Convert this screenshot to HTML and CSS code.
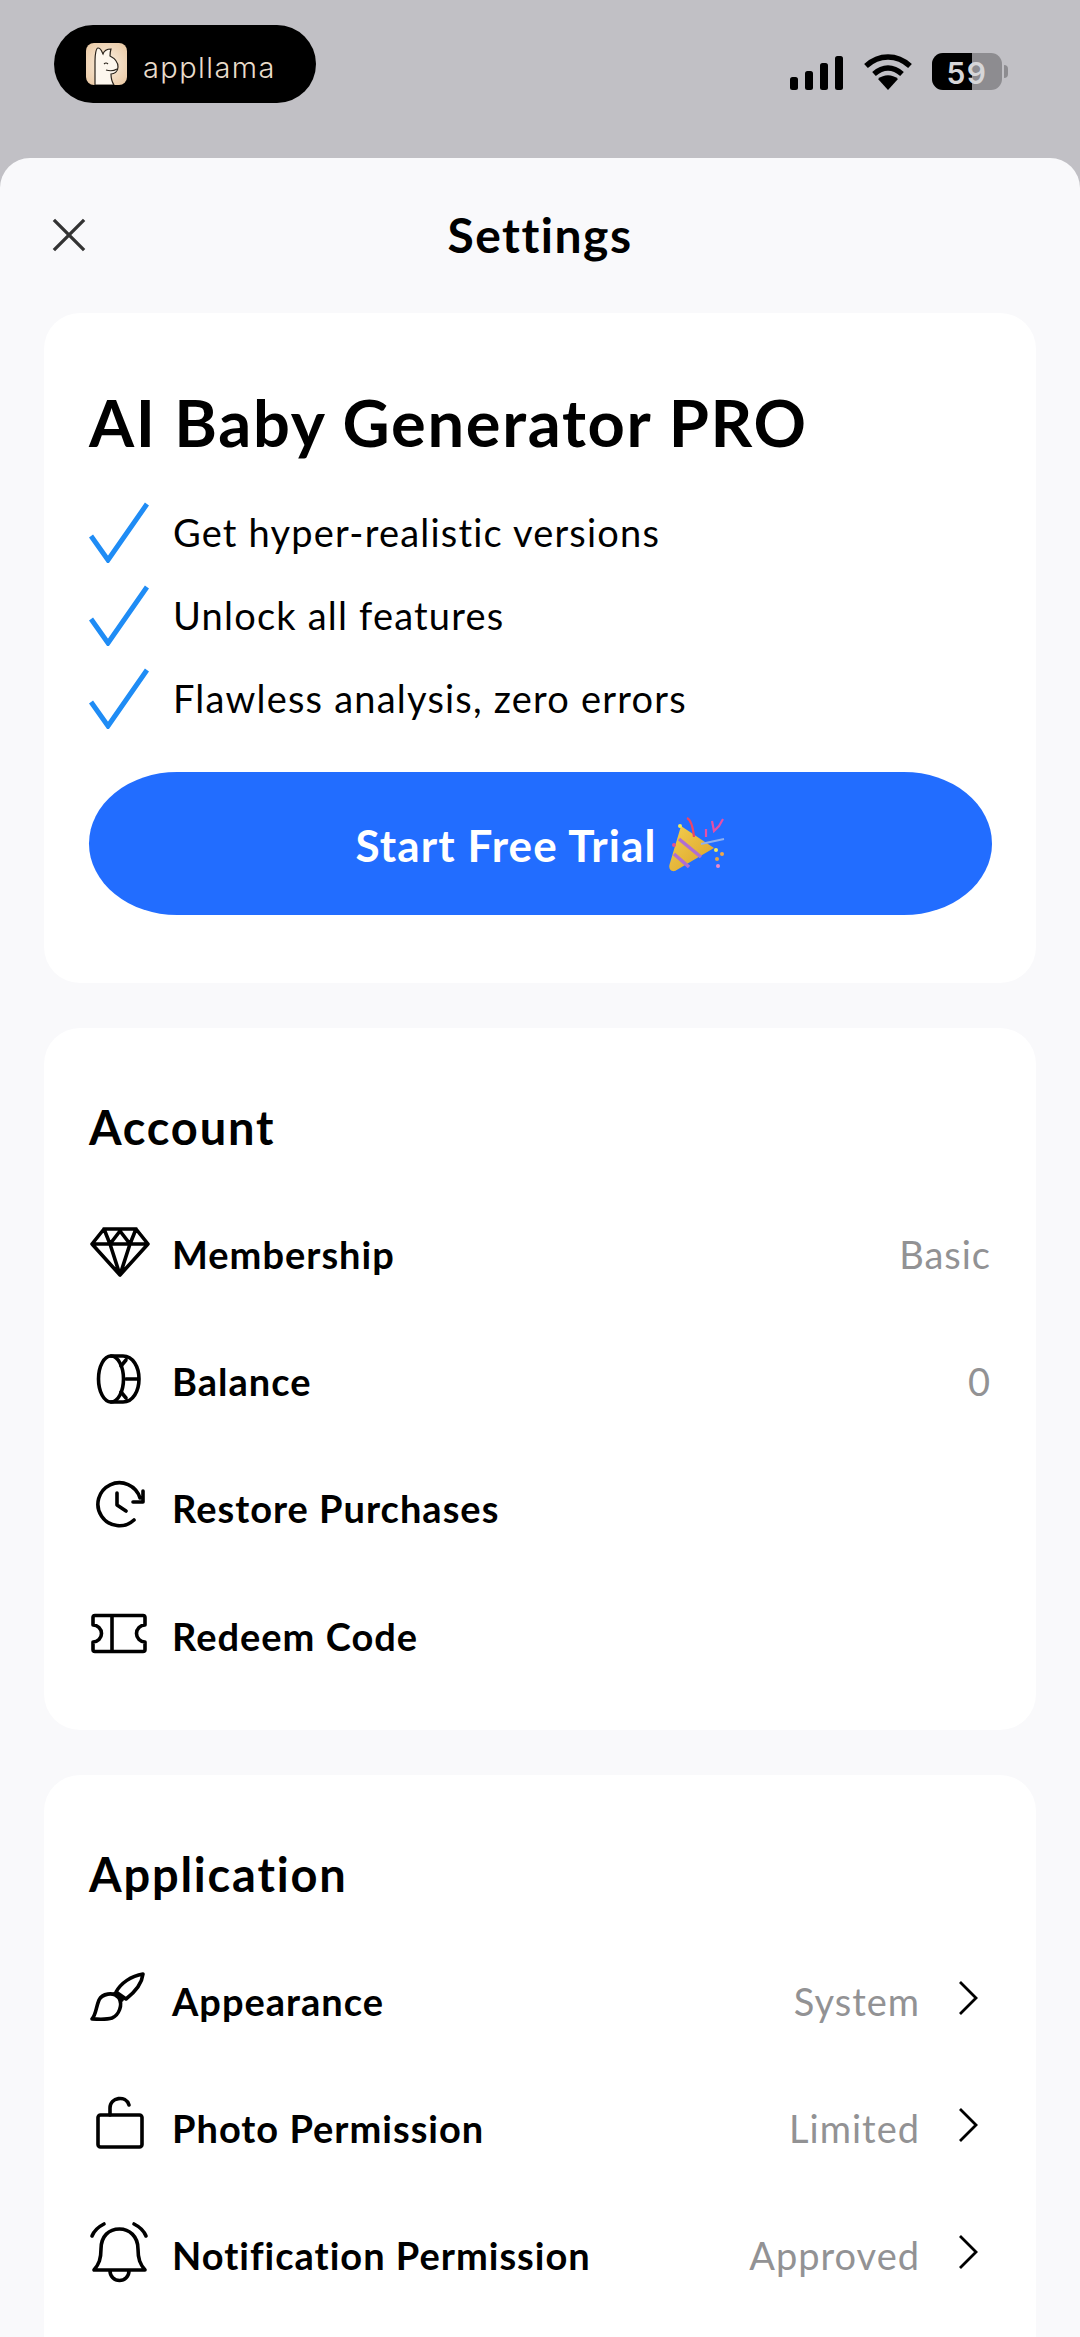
FILE: index.html
```html
<!DOCTYPE html>
<html lang="en">
<head>
  <meta charset="UTF-8" />
  <title>Settings</title>
  <link rel="stylesheet" href="styles.css">
</head>
<body>
  <div class="screen">
    <div class="status-bar">
      <div class="brand-pill">
        <svg class="brand-icon" viewBox="0 0 41 42">
          <defs>
            <radialGradient id="cream" cx="0.5" cy="0.5" r="0.75">
              <stop offset="0" stop-color="#fbf0e2"/>
              <stop offset="1" stop-color="#e8c49c"/>
            </radialGradient>
          </defs>
          <rect width="41" height="42" rx="8" fill="url(#cream)"/>
          <path d="M9 42V18C9 12 10 5 12 5C15 5 16 9 17 11C18 8 21 6 25 6C24 9 24 11 24 13C28 15 32 19 32 24C32 29 28 31 25 31C25 35 26 39 28 42Z" fill="#fdf7ee" stroke="#2b241c" stroke-width="1.2"/>
          <path d="M18 21Q20 19 22 21M20 27Q26 29 31 26" fill="none" stroke="#2b241c" stroke-width="1.1"/>
        </svg>
        <span class="brand-name">appllama</span>
      </div>
      <div class="status-icons">
        <svg class="signal" viewBox="0 0 54 36">
          <rect x="0" y="23" width="8" height="13" rx="2.5"/>
          <rect x="15" y="17" width="8" height="19" rx="2.5"/>
          <rect x="30" y="9" width="8" height="27" rx="2.5"/>
          <rect x="45" y="2" width="8" height="34" rx="2.5"/>
        </svg>
        <svg class="wifi" viewBox="0 0 48 36">
          <path d="M2 12C15 0 33 0 46 12M10 20C19 12 29 12 38 20" fill="none" stroke="#000" stroke-width="5.5"/>
          <path d="M14 25C20 20 28 20 34 25L24 36Z"/>
        </svg>
        <div class="battery">
          <div class="battery-body">
            <div class="battery-level"></div>
            <span class="battery-num">59</span>
          </div>
          <div class="battery-nub"></div>
        </div>
      </div>
    </div>

    <div class="sheet">
      <div class="sheet-head">
        <svg class="close-icon" viewBox="0 0 36 36">
          <path d="M2 2L34 34M34 2L2 34"/>
        </svg>
        <div class="sheet-title">Settings</div>
      </div>

      <section class="card pro-card">
        <h1>AI Baby Generator PRO</h1>
        <ul class="perks">
          <li><svg viewBox="0 0 60 62"><path d="M2 35L19 59L58 3"/></svg>Get hyper-realistic versions</li>
          <li><svg viewBox="0 0 60 62"><path d="M2 35L19 59L58 3"/></svg>Unlock all features</li>
          <li><svg viewBox="0 0 60 62"><path d="M2 35L19 59L58 3"/></svg>Flawless analysis, zero errors</li>
        </ul>
        <button class="trial-btn">
          <span>Start Free Trial</span>
          <svg class="popper" viewBox="0 0 56 56">
            <defs>
              <linearGradient id="gold" x1="0" y1="0" x2="1" y2="1">
                <stop offset="0" stop-color="#f4cf4e"/>
                <stop offset="1" stop-color="#d9a02a"/>
              </linearGradient>
            </defs>
            <path d="M12 9L45 31L6 54C1 55 -1 51 1 46Z" fill="url(#gold)"/>
            <path d="M10 22L32 40M5 37L20 50" stroke="#b06fd0" stroke-width="3.5" fill="none"/>
            <path d="M25 20C24 10 22 3 18 1" stroke="#ee4466" stroke-width="2.2" fill="none"/>
            <path d="M37 12V20M43 4L45 14L50 9L54 2" stroke="#e64fa8" stroke-width="2.2" fill="none"/>
            <path d="M32 27L55 22" stroke="#8fb0ee" stroke-width="2"/>
            <circle cx="11" cy="9" r="2" fill="#f2ea5c"/>
            <circle cx="47" cy="33" r="2" fill="#f2ea5c"/>
            <circle cx="53" cy="37" r="2" fill="#f0a848"/>
            <circle cx="48" cy="42" r="2" fill="#e4a548"/>
            <circle cx="49" cy="49" r="2" fill="#ee88cc"/>
            <circle cx="5" cy="28" r="2" fill="#e6528a"/>
          </svg>
        </button>
      </section>

      <section class="card account-card">
        <h2>Account</h2>
        <div class="row">
          <svg class="row-icon" viewBox="0 0 64 64"><path d="M16 7H48L60 22L32 53L4 22ZM4 22H60M16 7L22 22L32 9L42 22L48 7M22 22L32 53L42 22"/></svg>
          <span class="row-label">Membership</span>
          <span class="row-value">Basic</span>
        </div>
        <div class="row">
          <svg class="row-icon" viewBox="0 0 64 64"><ellipse cx="23" cy="30" rx="12.5" ry="23"/><path d="M23 7H35C45 7 51 18 51 30S45 53 35 53H23M38 11L33 17M38 30H51M38 49L33 43"/></svg>
          <span class="row-label">Balance</span>
          <span class="row-value">0</span>
        </div>
        <div class="row">
          <svg class="row-icon" viewBox="0 0 64 64"><path d="M52 22A21.5 21.5 0 1 0 46 44M55 15V26H45M29 17V29L38 35"/></svg>
          <span class="row-label">Restore Purchases</span>
        </div>
        <div class="row">
          <svg class="row-icon" viewBox="0 0 64 64"><path d="M7 11.5H55A2 2 0 0 1 57 13.500V21A8.500 8.500 0 0 0 57 38V45.500A2 2 0 0 1 55 47.500H7A2 2 0 0 1 5 45.500V38A8.500 8.500 0 0 0 5 21V13.500A2 2 0 0 1 7 11.500ZM24 11.500V47.500"/></svg>
          <span class="row-label">Redeem Code</span>
        </div>
      </section>

      <section class="card app-card">
        <h2>Application</h2>
        <div class="row">
          <svg class="row-icon" viewBox="0 0 64 64"><path d="M4 50C8 46 8 38 11 31C14 25 25 22 31 29C35 36 31 46 24 49C18 51 10 50 4 50ZM28 23C33 14 43 7 55 5C54 14 47 23 38 30ZM26 25L34 31"/></svg>
          <span class="row-label">Appearance</span>
          <span class="row-value">System</span>
          <svg class="chevron" viewBox="0 0 20 36"><path d="M2 2L18 18L2 34"/></svg>
        </div>
        <div class="row">
          <svg class="row-icon" viewBox="0 0 64 64"><rect x="10" y="19" width="44" height="32" rx="2.500"/><path d="M22 19V12C22 1 38 -1 41 9"/></svg>
          <span class="row-label">Photo Permission</span>
          <span class="row-value">Limited</span>
          <svg class="chevron" viewBox="0 0 20 36"><path d="M2 2L18 18L2 34"/></svg>
        </div>
        <div class="row">
          <svg class="row-icon" viewBox="0 0 64 64"><path d="M6 47H57C52 41 50 36 50 26C50 13 41 6 31.500 6C21 6 13 13 13 26C13 36 11 41 6 47ZM22 48A9.500 9.500 0 0 0 41 48M4 13C6 8 10 4 16 1M46 1C52 4 56 8 58 13"/></svg>
          <span class="row-label">Notification Permission</span>
          <span class="row-value">Approved</span>
          <svg class="chevron" viewBox="0 0 20 36"><path d="M2 2L18 18L2 34"/></svg>
        </div>
      </section>
    </div>
  </div>
</body>
</html>
```

FILE: styles.css
```css
* {
  box-sizing: border-box;
}
html, body {
  margin: 0;
  padding: 0;
}
body {
  font-family: "Lato", "Noto Sans", sans-serif;
  color: #000;
  background: #c1c0c5;
}
.screen {
  width: 1080px;
  height: 2337px;
  overflow: hidden;
}

/* status bar */
.status-bar {
  height: 158px;
  padding: 25px 72px 0 54px;
  display: flex;
  justify-content: space-between;
  align-items: flex-start;
}
.brand-pill {
  width: 262px;
  height: 78px;
  background: #000;
  border-radius: 39px;
  display: flex;
  align-items: center;
  gap: 16px;
  padding: 0 0 0 32px;
}
.brand-icon {
  width: 41px;
  height: 42px;
  flex: none;
}
.brand-name {
  color: #e9dccb;
  font-family: "Inter", sans-serif;
  font-size: 29px;
  font-weight: 300;
  letter-spacing: 1.4px;
  position: relative;
  top: 3px;
}
.status-icons {
  display: flex;
  align-items: center;
  margin-top: 28px;
  gap: 20px;
}
.signal {
  width: 54px;
  height: 36px;
}
.wifi {
  width: 48px;
  height: 36px;
}
.battery {
  display: flex;
  align-items: center;
  gap: 2px;
}
.battery-body {
  width: 70px;
  height: 37px;
  border-radius: 11px;
  background: #8d8c90;
  position: relative;
  overflow: hidden;
  text-align: center;
}
.battery-level {
  position: absolute;
  left: 0;
  top: 0;
  bottom: 0;
  width: 40px;
  background: #000;
}
.battery-num {
  position: relative;
  color: #d6d6d8;
  font-family: "Inter", sans-serif;
  font-size: 30px;
  font-weight: 600;
  letter-spacing: 1.5px;
  line-height: 40px;
}
.battery-nub {
  width: 4px;
  height: 13px;
  background: #8d8c90;
  border-radius: 0 4px 4px 0;
}

/* sheet */
.sheet {
  height: 2179px;
  background: #f9f9fb;
  border-radius: 30px 30px 0 0;
  padding: 0 44px;
}
.sheet-head {
  height: 155px;
  position: relative;
  display: flex;
  align-items: center;
  justify-content: center;
}
.close-icon {
  position: absolute;
  left: 8px;
  top: 60px;
  width: 34px;
  height: 34px;
  fill: none;
  stroke: #333;
  stroke-width: 3.5;
}
.sheet-title {
  font-size: 48px;
  font-weight: 700;
  letter-spacing: 1.5px;
  margin-top: -2px;
}
.card {
  background: #fff;
  border-radius: 36px;
  padding: 0 45px;
  margin-bottom: 45px;
}
.pro-card {
  height: 670px;
  padding-top: 73px;
}
h1 {
  margin: 0 0 32px;
  font-size: 65px;
  line-height: 72px;
  font-weight: 700;
  letter-spacing: 1.7px;
  white-space: nowrap;
}
.perks {
  list-style: none;
  margin: 0;
  padding: 0;
}
.perks li {
  height: 83px;
  display: flex;
  align-items: center;
  gap: 24px;
  font-size: 38px;
  letter-spacing: 1.2px;
}
.perks svg {
  width: 60px;
  height: 62px;
  fill: none;
  stroke: #1f8cf5;
  stroke-width: 5;
  flex: none;
}
.trial-btn {
  display: flex;
  align-items: center;
  justify-content: center;
  gap: 13px;
  width: 903px;
  height: 143px;
  margin-top: 33px;
  padding-top: 3px;
  border: none;
  border-radius: 88px / 71.5px;
  background: #226dff;
  color: #fff;
  font-family: inherit;
  font-size: 44px;
  font-weight: 700;
  letter-spacing: 1.1px;
}
.popper {
  width: 56px;
  height: 56px;
  flex: none;
}
.account-card {
  height: 702px;
}
.app-card {
  height: 640px;
}
h2 {
  margin: 0;
  padding-top: 71px;
  font-size: 47px;
  line-height: 56px;
  height: 162px;
  font-weight: 700;
  letter-spacing: 1.8px;
}
.row {
  height: 127.4px;
  display: flex;
  align-items: center;
  font-size: 38px;
  letter-spacing: 1px;
}
.row-icon {
  width: 64px;
  height: 64px;
  margin-left: -1px;
  margin-right: 20px;
  flex: none;
  fill: none;
  stroke: #000;
  stroke-width: 3.6;
  stroke-linejoin: round;
  stroke-linecap: round;
  overflow: visible;
}
.row-label {
  font-weight: 700;
  flex: 1;
}
.row-value {
  color: #929294;
}
.chevron {
  width: 20px;
  height: 36px;
  margin-left: 38px;
  margin-right: 13px;
  margin-top: -6px;
  fill: none;
  stroke: #000;
  stroke-width: 2.8;
}
```
